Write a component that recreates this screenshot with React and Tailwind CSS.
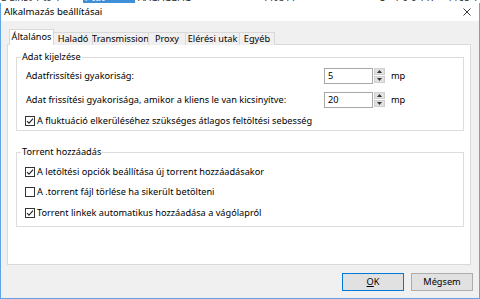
import React from "react";

function Check({ checked }) {
  return (
    <svg width="10" height="10" viewBox="0 0 10 10" className="shrink-0">
      <rect x="0.5" y="0.5" width="9" height="9" fill="#fff" stroke="#333" />
      {checked && (
        <path d="M2 5.2 L4 7.2 L8 2.6" fill="none" stroke="#222" strokeWidth="1.1" />
      )}
    </svg>
  );
}

function Spin({ value }) {
  return (
    <div className="flex h-[16px] w-[61px]">
      <div className="flex-1 border border-[#a9a9a9] bg-white pl-[3px] leading-[14px]">{value}</div>
      <div className="ml-[1px] flex w-[11px] flex-col gap-[1px]">
        <div className="flex h-[7px] items-center justify-center border border-[#cfcfcf] bg-[#e1e1e1]">
          <svg width="5" height="3" viewBox="0 0 5 3"><path d="M0 3 L2.5 0 L5 3Z" fill="#333" /></svg>
        </div>
        <div className="flex h-[7px] items-center justify-center border border-[#cfcfcf] bg-[#e1e1e1]">
          <svg width="5" height="3" viewBox="0 0 5 3"><path d="M0 0 L2.5 3 L5 0Z" fill="#333" /></svg>
        </div>
      </div>
    </div>
  );
}

function CheckRow({ checked, children, className = "" }) {
  return (
    <div className={"-ml-[1px] flex h-[16px] items-center gap-[2px] " + className}>
      <Check checked={checked} />
      <span>{children}</span>
    </div>
  );
}

export default function App() {
  const tabs = [
    ["Haladó", "w-[39px]"],
    ["Transmission", "w-[57px]"],
    ["Proxy", "w-[38px]"],
    ["Elérési utak", "w-[55px]"],
    ["Egyéb", "w-[36px]"],
  ];
  return (
    <div className="flex h-[299px] w-[480px] flex-col overflow-hidden bg-white font-['Noto_Sans',sans-serif] text-[9.2px] text-black">
      <div className="h-[3px] overflow-hidden bg-white">
        <div className="-mt-[8px] flex h-[11px] items-end whitespace-nowrap text-[10px] leading-[11px] text-[#333]">
          <span className="w-[83px] pl-[1px]">a Einst 1 t9 1</span>
          <span className="w-[52px] bg-[#3d8fd8] text-white">1 ttlt</span>
          <span className="w-[128px] pl-[3px]">AAGAGBAG</span>
          <span className="w-[117px]">TTIUTT</span>
          <span className="w-[67px]">3&gt; 1 0 0 1 X</span>
          <span>1165 1</span>
        </div>
      </div>
      <div className="flex flex-1 flex-col border-x border-b border-[#5fa5e6] bg-[#f0f0f0]">
        <div className="flex h-[18px] items-center justify-between bg-white pl-[3px] pr-[8px]">
          <span className="text-[9.6px] leading-[12px]">Alkalmazás beállításai</span>
          <svg width="8" height="8" viewBox="0 0 8 8">
            <path d="M0.5 0.5 L7.5 7.5 M7.5 0.5 L0.5 7.5" stroke="#222" strokeWidth="0.9" />
          </svg>
        </div>
        <div className="flex flex-1 flex-col pt-[8px]">
          <div className="relative z-10 -mb-[1px] ml-[8px] flex h-[16px] items-end whitespace-nowrap">
            <div className="flex h-[16px] w-[45px] items-center justify-center border border-b-0 border-[#d9d9d9] bg-white pb-[1px]">
              Általános
            </div>
            {tabs.map(([t, w], i) => (
              <div
                key={t}
                className={
                  "flex h-[13px] items-center justify-center border border-b-0 border-[#d9d9d9] bg-[#f0f0f0] " +
                  w +
                  (i === 0 ? " border-l-0" : " -ml-[1px]")
                }
              >
                {t}
              </div>
            ))}
          </div>
          <div className="ml-[6px] mr-[8px] flex-1 border border-[#d9d9d9] bg-white pl-[8px] pr-[6px] pt-[12px]">
            <div className="relative border border-[#dcdcdc] pb-[1px] pl-[9px] pt-[10px]">
              <span className="absolute -top-[7px] left-[4px] bg-white px-[1px] leading-[12px]">Adat kijelzése</span>
              <div className="flex h-[16px] items-center">
                <span className="w-[298px]">Adatfrissítési gyakoriság:</span>
                <Spin value="5" />
                <span className="ml-[6px]">mp</span>
              </div>
              <div className="mt-[8px] flex h-[16px] items-center">
                <span className="w-[298px]">Adat frissítési gyakorisága, amikor a kliens le van kicsinyítve:</span>
                <Spin value="20" />
                <span className="ml-[6px]">mp</span>
              </div>
              <CheckRow checked className="mt-[5px]">
                A fluktuáció elkerüléséhez szükséges átlagos feltöltési sebesség
              </CheckRow>
            </div>
            <div className="relative mt-[21px] border border-[#dcdcdc] pb-[5px] pl-[9px] pt-[11px]">
              <span className="absolute -top-[7px] left-[4px] bg-white px-[1px] leading-[12px]">Torrent hozzáadás</span>
              <CheckRow checked>A letöltési opciók beállítása új torrent hozzáadásakor</CheckRow>
              <CheckRow className="mt-[4px]">A .torrent fájl törlése ha sikerült betölteni</CheckRow>
              <CheckRow checked className="mt-[5px]">
                Torrent linkek automatikus hozzáadása a vágólapról
              </CheckRow>
            </div>
          </div>
          <div className="flex justify-end gap-[7px] pb-[7px] pr-[6px] pt-[8px]">
            <div className="flex h-[18px] w-[62px] items-center justify-center border border-[#0078d7] bg-[#e1e1e1]">
              <span>
                <span className="underline">O</span>K
              </span>
            </div>
            <div className="flex h-[18px] w-[62px] items-center justify-center border border-[#adadad] bg-[#e1e1e1]">
              Mégsem
            </div>
          </div>
        </div>
      </div>
    </div>
  );
}
